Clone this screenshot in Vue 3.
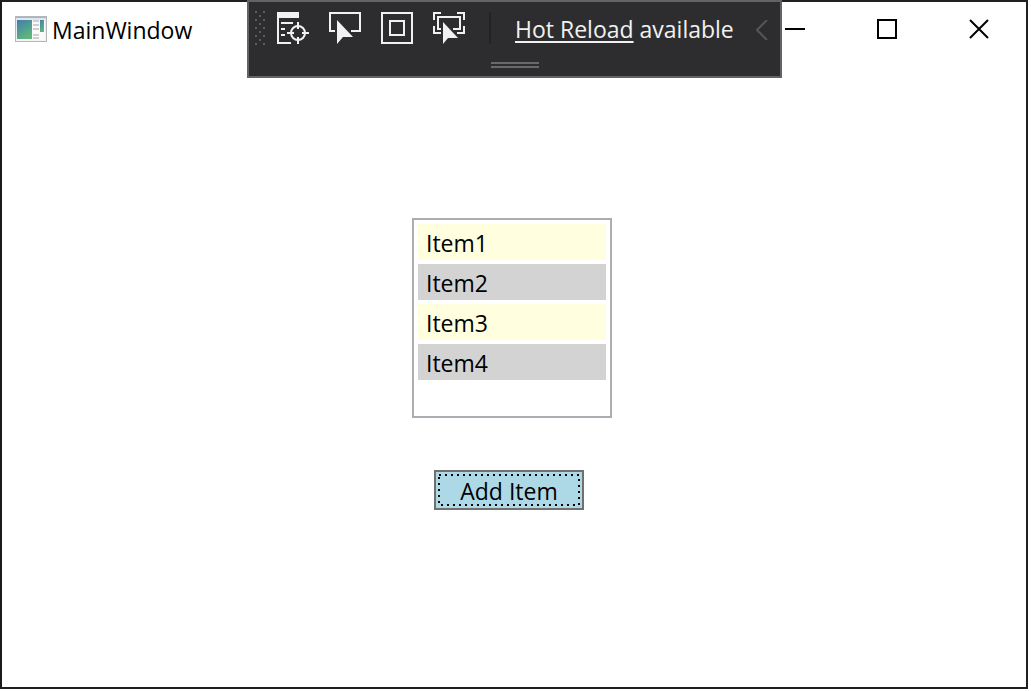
<script setup>
import { ref } from 'vue'

const items = ref(['Item1', 'Item2', 'Item3', 'Item4'])

function addItem() {
  items.value.push(`Item${items.value.length + 1}`)
}

const gripDots = []
for (let row = 0; row < 9; row++) {
  const columns = row % 2 === 0 ? [0, 8] : [4]
  columns.forEach((x) => gripDots.push({ x, y: row * 4 }))
}
</script>

<template>
  <div class="window">
    <header class="titlebar">
      <svg class="app-icon" width="32" height="26" viewBox="0 0 32 26" aria-hidden="true">
        <defs>
          <linearGradient id="pane" x1="0" y1="0" x2="0.5" y2="1">
            <stop offset="0" stop-color="#3f7fae" />
            <stop offset="1" stop-color="#5fb57c" />
          </linearGradient>
          <linearGradient id="frame" x1="0" y1="0" x2="0" y2="1">
            <stop offset="0" stop-color="#dfe5ee" />
            <stop offset="1" stop-color="#f4f4f4" />
          </linearGradient>
        </defs>
        <rect x="0.5" y="0.5" width="31" height="25" fill="url(#frame)" stroke="#b3b7bd" />
        <rect x="1" y="1" width="30" height="1" fill="#a7b3c6" />
        <rect x="2" y="4" width="15" height="19" fill="url(#pane)" />
        <rect x="17" y="4" width="13" height="20" fill="#fafafa" />
        <path d="M18 5h6M18 9h6M18 13h6M18 19h6M18 22h6" stroke="#cfcfcf" stroke-width="2" />
        <rect x="25" y="4" width="4" height="12" fill="url(#pane)" />
      </svg>
      <h1 class="title">MainWindow</h1>
      <div class="caption-buttons">
        <button type="button" aria-label="Minimize">
          <svg width="20" height="20" viewBox="0 0 20 20"><path d="M0 10h20" /></svg>
        </button>
        <button type="button" aria-label="Maximize">
          <svg width="20" height="20" viewBox="0 0 20 20"><path d="M1 1h18v18H1z" /></svg>
        </button>
        <button type="button" aria-label="Close">
          <svg width="20" height="20" viewBox="0 0 20 20"><path d="M1 1l18 18M19 1L1 19" /></svg>
        </button>
      </div>
    </header>

    <div class="debug-bar">
      <div class="tools">
        <svg class="grip" width="10" height="34" viewBox="0 0 10 34" aria-hidden="true">
          <rect v-for="(dot, i) in gripDots" :key="i" :x="dot.x" :y="dot.y" width="2" height="2" />
        </svg>
        <button type="button" class="tool" aria-label="Go to Live Visual Tree">
          <svg width="32" height="32" viewBox="0 0 32 32">
            <path class="solid" d="M0 0h22v6H0z" />
            <path d="M1 4v27h13M4 11h12M4 17h4M4 23h4" />
            <circle cx="21" cy="21" r="7" />
            <path d="M10 21h7M25 21h7M21 10v7M21 25v7" />
          </svg>
        </button>
        <button type="button" class="tool" aria-label="Select Element">
          <svg width="32" height="32" viewBox="0 0 32 32">
            <path d="M6 19H1V1h30v18h-9" />
            <path class="solid" d="M8 8v24l6-7 10 0z" />
          </svg>
        </button>
        <button type="button" class="tool" aria-label="Display Layout Adorners">
          <svg width="32" height="32" viewBox="0 0 32 32">
            <path d="M1 1h30v30H1zM9 9h14v14H9z" />
          </svg>
        </button>
        <button type="button" class="tool" aria-label="Track Focused Element">
          <svg width="32" height="32" viewBox="0 0 32 32">
            <path d="M1 8V1h7M24 1h7v7M31 14v7h-7M8 21H1v-7" />
            <path d="M8 17H5V5h22v12h-7" />
            <path class="solid" d="M10 10v22l5-6h10z" />
          </svg>
        </button>
        <span class="separator"></span>
        <p class="status"><a href="#">Hot Reload</a> available</p>
        <button type="button" class="collapse" aria-label="Collapse">
          <svg width="12" height="20" viewBox="0 0 12 20"><path d="M11 0L1 10l10 10" /></svg>
        </button>
      </div>
      <div class="handle"></div>
    </div>

    <main class="content">
      <ul class="list">
        <li v-for="item in items" :key="item">{{ item }}</li>
      </ul>
      <button type="button" class="add" @click="addItem">
        Add Item
        <svg class="focus" width="146" height="36" viewBox="0 0 146 36" aria-hidden="true">
          <rect x="3" y="3" width="140" height="30" />
        </svg>
      </button>
    </main>
  </div>
</template>

<style>
body {
  background: #fff;
}
</style>

<style scoped>
.window {
  position: relative;
  box-sizing: border-box;
  display: flex;
  flex-direction: column;
  height: calc(100vh - 2px);
  margin: 0 3px 2px 0;
  border: 2px solid #231f20;
  border-left-color: #1b1b1c;
  background: #fff;
  color: #000;
  font: 23px/32px "Open Sans", "Noto Sans", sans-serif;
}

button {
  padding: 0;
  border: 0;
  background: none;
  color: inherit;
  font: inherit;
}

svg {
  display: block;
}

.titlebar {
  display: flex;
  align-items: center;
  height: 54px;
  padding: 0 1px 0 13px;
}

.title {
  flex: 1;
  margin: 2px 0 0 5px;
  font-size: 23px;
  font-weight: 400;
}

.caption-buttons {
  display: flex;
  height: 100%;
}

.caption-buttons button {
  display: grid;
  place-items: center;
  width: 92px;
}

.caption-buttons svg {
  fill: none;
  stroke: #000;
  stroke-width: 2;
}

.debug-bar {
  position: absolute;
  top: -2px;
  left: 50%;
  box-sizing: border-box;
  width: 535px;
  height: 78px;
  margin-left: -267px;
  border: 2px solid #636365;
  background: #2d2d30;
  color: #f1f1f1;
}

.tools {
  display: flex;
  align-items: center;
  height: 52px;
  padding: 0 12px 0 6px;
}

.grip {
  margin-right: 12px;
  fill: #5c5c5f;
}

.tool {
  margin-right: 20px;
}

.tool svg,
.collapse svg {
  fill: none;
  stroke: #f1f1f1;
  stroke-width: 2;
}

.tool .solid {
  fill: #f1f1f1;
  stroke: none;
}

.separator {
  width: 2px;
  height: 32px;
  margin-left: 4px;
  background: #222224;
}

.status {
  flex: 1;
  margin: 2px 0 0 24px;
  white-space: nowrap;
}

.status a {
  color: inherit;
  text-underline-offset: 3px;
}

.collapse {
  margin-top: 4px;
}

.collapse svg {
  stroke: #555558;
}

.handle {
  box-sizing: border-box;
  width: 48px;
  height: 6px;
  margin: 8px auto 0;
  border: solid #69696b;
  border-width: 2px 0;
}

.content {
  display: flex;
  flex: 1;
  flex-direction: column;
  align-items: center;
  padding-top: 162px;
}

.list {
  box-sizing: border-box;
  width: 200px;
  min-height: 200px;
  margin: 0 4px 52px 0;
  padding: 4px;
  border: 2px solid #abadb3;
  list-style: none;
}

.list li {
  height: 36px;
  margin-bottom: 4px;
  padding-left: 8px;
  background: #d3d3d3;
  line-height: 38px;
}

.list li:nth-child(odd) {
  background: #ffffe0;
}

.add {
  position: relative;
  width: 150px;
  height: 40px;
  padding-top: 2px;
  margin-right: 10px;
  border: 2px solid #707070;
  background: #add8e6;
}

.focus {
  position: absolute;
  inset: 0;
  fill: none;
  stroke: #000;
  stroke-width: 2;
  stroke-dasharray: 2 4;
}
</style>
